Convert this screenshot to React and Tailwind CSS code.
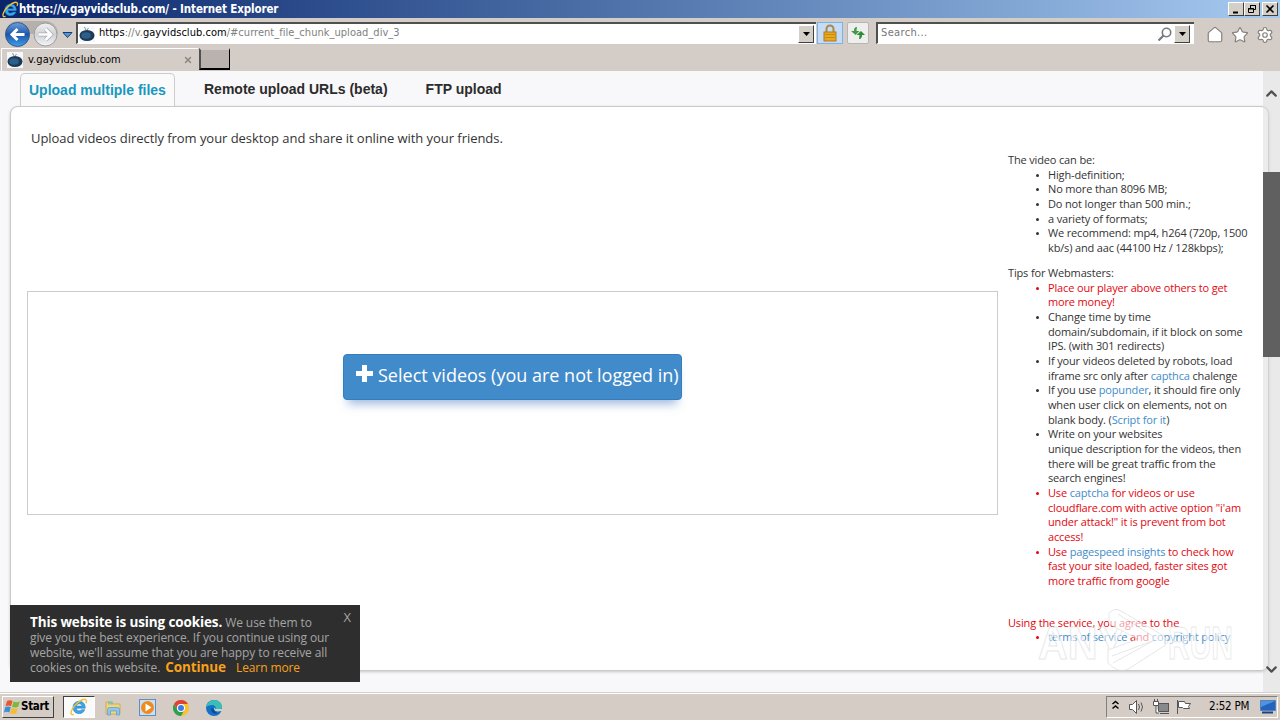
import { ChevronDown, ChevronUp, Home, Settings, Star, X } from 'lucide-react';

const UI = "font-['DejaVu_Sans_Condensed','DejaVu_Sans',sans-serif]";
const SEGOE = "font-['Open_Sans',sans-serif]";

// ── Icons ────────────────────────────────────────────────────────────────────
function IeIcon({ className }) {
  return (
    <svg viewBox="0 0 18 18" className={className}>
      <path d="M15.2 10.2H6.3c.2 1.6 1.3 2.6 2.9 2.6 1 0 1.9-.4 2.4-1.1h3.2c-.8 2.4-3 3.9-5.7 3.9-3.6 0-6.1-2.6-6.1-6.2 0-3.5 2.6-6.1 6.2-6.1 3.8 0 6.2 2.7 6 6.9ZM6.3 8.1h5.8c-.2-1.4-1.3-2.3-2.8-2.3S6.600 6.700 6.300 8.100Z" fill="#3aa5e8" stroke="#1a72bd" strokeWidth=".5" />
      <path d="M3.800 16.300C1.300 17.300.200 15.800 1.600 12.400 3.800 7 10.500 1.600 14.300 1.300c2.300-.2 2.500 1.800 1.700 3.900" fill="none" stroke="#f2c230" strokeWidth="1.400" />
    </svg>
  );
}

function SiteIcon({ className }) {
  return (
    <svg viewBox="0 0 16 16" className={className}>
      <rect width="16" height="16" fill="#f5f7f9" />
      <path d="M7 4 5.500 1M8 4l1.500-2" stroke="#8a9199" />
      <ellipse cx="8" cy="9.500" rx="7.500" ry="5.500" fill="#1d3a55" />
      <ellipse cx="7" cy="9.500" rx="4.800" ry="3.200" fill="#2b5e8a" />
    </svg>
  );
}

function NavArrows() {
  return (
    <svg viewBox="0 0 72 30" className="h-[30px] w-[72px]">
      <defs>
        <linearGradient id="back" x1="0" y1="0" x2="0" y2="1">
          <stop offset="0" stopColor="#6fa0dc" />
          <stop offset=".5" stopColor="#1d55aa" />
          <stop offset="1" stopColor="#3fa0ea" />
        </linearGradient>
        <linearGradient id="fwd" x1="0" y1="0" x2="0" y2="1">
          <stop offset="0" stopColor="#f2f2f2" />
          <stop offset=".5" stopColor="#ced1d6" />
          <stop offset="1" stopColor="#f4f6f8" />
        </linearGradient>
      </defs>
      <path d="M15 2h28a13 13 0 0 1 13 13H3A13 13 0 0 1 15 2Z" fill="#b5b0ab" />
      <circle cx="15.500" cy="15.500" r="12" fill="url(#back)" stroke="#34598c" />
      <circle cx="43.500" cy="15.500" r="11.500" fill="url(#fwd)" stroke="#9a9b9e" />
      <path d="M22.500 15.500h-12M15.500 10l-5.500 5.500 5.500 5.500" fill="none" stroke="#fff" strokeWidth="3" />
      <path d="M36.500 15.500h12M43.500 10l5.500 5.500-5.500 5.500" fill="none" stroke="#a8abb0" strokeWidth="4" />
      <path d="M36.500 15.500h12M43.500 10l5.500 5.500-5.500 5.500" fill="none" stroke="#fff" strokeWidth="2.600" />
      <path d="M61 13.500h9l-4.500 5z" fill="#4a9be8" stroke="#1b3b6b" />
    </svg>
  );
}

function DropButton({ className }) {
  return (
    <span className={`flex items-center justify-center border border-t-white border-l-white border-r-[#404040] border-b-[#404040] bg-[#d4d0c8] ${className}`}>
      <svg viewBox="0 0 7 4" className="h-1 w-[7px]"><path d="M0 0h7L3.500 4z" /></svg>
    </span>
  );
}

function LockIcon() {
  return (
    <svg viewBox="0 0 16 18" className="h-[18px] w-4">
      <path d="M4.500 9V5a3.500 3.500 0 0 1 7 0v4" fill="none" stroke="#a98a45" strokeWidth="2" />
      <rect x="2" y="8" width="12" height="9" fill="#e9a820" stroke="#b27a12" />
      <path d="M3 10.500h10M3 13.500h10" stroke="#c98a14" />
    </svg>
  );
}

function RefreshIcon() {
  return (
    <svg viewBox="0 0 16 14" className="h-3.5 w-4">
      <path d="M7 1C4.500 1 4 3 4 5H1l4.500 4L9.500 5H6.500C6.500 3 7 2 7 1Z" fill="#3e9c45" />
      <path d="M9 13c2.500 0 3-2 3-4h3l-4-4-4.500 4h3C9.500 11 9 12 9 13Z" fill="#2e8b36" />
    </svg>
  );
}

function WindowsFlag() {
  return (
    <svg viewBox="0 0 17 16" className="h-4 w-[17px]">
      <path d="M3 2c2-1.300 4-1 5.500 0L7 7.300C5.500 6.300 3.500 6.200 1.500 7.300Z" fill="#e8562a" />
      <path d="M9.500 2.500c2 1 4 1 6.300-.2l-1.600 5.500c-2 1-4 1.100-6.200 0Z" fill="#7cb83a" />
      <path d="M1.200 8.300c2-1.200 4-1 5.600 0L5.300 13.500c-1.600-1-3.500-1-5.300 0Z" fill="#3b8ede" />
      <path d="M7.700 9c2 1 4 1 6.200-.1l-1.600 5.400c-2 1.100-4 1-6.100 0Z" fill="#f5bd2c" />
    </svg>
  );
}

function FolderIcon() {
  return (
    <svg viewBox="0 0 17 16" className="h-4 w-[17px]">
      <path d="M1 2h6l1 2h7v10H1z" fill="#f0d77d" stroke="#cfae4f" />
      <path d="M3 1.500h5v3H3z" fill="#8bc4a0" />
      <path d="M2.500 15V9.500q0-2 2-2h8q2 0 2 2V15h-3v-4h-6v4z" fill="#8ec5ec" stroke="#5e9bcb" strokeWidth=".7" />
    </svg>
  );
}

function PlayerIcon() {
  return (
    <svg viewBox="0 0 17 17" className="h-[17px] w-[17px]">
      <rect x=".5" y=".5" width="16" height="16" fill="#cbdff3" stroke="#5c8fc2" />
      <circle cx="8.500" cy="8.500" r="6.500" fill="#f08a1d" />
      <path d="M6.500 4.500v8l6-4z" fill="#fff" />
    </svg>
  );
}

function ChromeIcon() {
  return (
    <svg viewBox="0 0 16 16" className="h-4 w-4">
      <circle cx="8" cy="8" r="8" fill="#f7c22d" />
      <path d="M1.070 4A8 8 0 0 1 14.930 4H8a4 4 0 0 0-3.460 6Z" fill="#dc4437" />
      <path d="M1.070 4A8 8 0 0 0 8 16l3.460-6a4 4 0 0 1-6.920 0Z" fill="#2f9e55" />
      <circle cx="8" cy="8" r="4" fill="#fff" />
      <circle cx="8" cy="8" r="3" fill="#3b7de8" />
    </svg>
  );
}

function EdgeIcon() {
  return (
    <svg viewBox="0 0 16 16" className="h-4 w-4">
      <circle cx="8" cy="8" r="8" fill="#1571c8" />
      <path d="M.2 7.500C.8 3.200 4 0 8.200 0 12.800 0 16 3.200 16 6.800c0 2.500-2 4-4.500 4-1.800 0-2.600-.8-2-1.600 1-1.500-.4-4.200-3.500-4.200C3.200 5 1 6 .2 7.500Z" fill="#39bfb5" />
      <path d="M5.500 8C4 13 9 15 14.500 12.500 12 14 7.500 12 7.500 8.500Z" fill="#0c4c94" />
      <path d="M8 7.500c-.5 3 2.500 4.800 7 3.500l1.500 1.500V9H9.500Z" fill="#d4d0c8" />
    </svg>
  );
}

function TrayIcons() {
  return (
    <svg viewBox="0 0 84 18" className="h-[18px] w-[84px]" fill="#fff" stroke="#55565a">
      <path d="M2.500 7 5.500 4.500 8.500 7M2.500 11.500l3-2.500 3 2.500" fill="none" stroke="#000" strokeWidth="1.500" transform="translate(0 -1)" />
      <path d="M19.500 6.500h3l4-4v13l-4-4h-3z" />
      <path d="M28.500 6q2 3 0 6M31 4.500q3 4.500 0 9" fill="none" />
      <rect x="48.500" y="5.500" width="10" height="8" fill="#88898c" />
      <path d="M50 15.500h9M43.500 3.500h5v4h-5zM46 8v7h3M44.500 1v2M47.500 1v2" />
      <path d="M67.500 2v14M68.500 3.500h6l1 2h5l-2 3 1 2h-6l-1-1h-4z" />
    </svg>
  );
}

// ── Browser chrome ───────────────────────────────────────────────────────────
function TitleBar() {
  return (
    <div className="flex h-[18px] items-center bg-linear-to-r from-[#0a246a] to-[#a6caf0] pr-0.5 pl-0.5">
      <IeIcon className="h-[17px] w-[17px]" />
      <span className={`${UI} text-[11.5px] leading-[18px] font-bold tracking-[-0.12px] whitespace-nowrap text-white`}>
        https://v.gayvidsclub.com/ - Internet Explorer
      </span>
      <div className="ml-auto flex h-3.5">
        {['min', 'restore', 'close'].map((kind) => (
          <span
            key={kind}
            className="flex w-4 items-center justify-center border border-t-white border-r-[#404040] border-b-[#404040] border-l-white bg-[#d4d0c8] last:ml-0.5"
          >
            <svg viewBox="0 0 10 10" className="h-2.5 w-2.5" fill="none" stroke="#000">
              {kind === 'min' && <path d="M2 8.500h5" strokeWidth="2" />}
              {kind === 'restore' && <path d="M3.500 4V1.500h5v4H7M3 1.500h6M1.500 4.500h5v4h-5zM1 5h6" />}
              {kind === 'close' && <path d="m1.500 1.500 7 7m0-7-7 7" strokeWidth="1.600" />}
            </svg>
          </span>
        ))}
      </div>
    </div>
  );
}

function AddressRow() {
  return (
    <div className="flex h-[30px] items-start pt-px pl-0.5">
      <NavArrows />
      <div className="mt-[3px] ml-0.5 flex h-[22px] w-[740px] items-center border-t-2 border-l-2 border-t-[#505050] border-l-[#505050] border-b border-b-white bg-white pl-px">
        <SiteIcon className="h-4 w-4" />
        <span className={`${UI} ml-[4px] text-[11px] tracking-[0.03px] whitespace-nowrap text-[#808080]`}>
          <span className="text-black">https</span>://v.<span className="text-black">gayvidsclub.com</span>/#current_file_chunk_upload_div_3
        </span>
        <DropButton className="mr-0.5 ml-auto h-[18px] w-4" />
      </div>
      <div className="mt-[3px] ml-px flex h-[22px] w-[26px] items-center justify-center border border-[#7eb1e8] bg-[#c5dcf7]"><LockIcon /></div>
      <div className="mt-[3px] ml-1 flex h-[22px] w-[22px] items-center justify-center rounded-xs border border-[#b9b5b0] bg-[#eeeeee]"><RefreshIcon /></div>
      <div className="mt-[3px] ml-[7px] flex h-[22px] w-[318px] items-center border-t-2 border-l-2 border-t-[#505050] border-l-[#505050] border-b border-b-white bg-white pr-1 pl-[3px]">
        <span className={`${UI} text-[11px] tracking-[0.35px] text-[#767676]`}>Search...</span>
        <svg viewBox="0 0 14 14" className="mr-0.5 ml-auto h-3.5 w-3.5" fill="none" stroke="#77797c">
          <circle cx="8.500" cy="5.500" r="4.200" strokeWidth="1.600" />
          <path d="m5.500 8.500-5 5" strokeWidth="2.200" />
        </svg>
        <DropButton className="h-[18px] w-4" />
      </div>
      <div className="mt-[7px] ml-3 flex gap-[7px]">
        <Home size={18} fill="#fff" stroke="#85817c" strokeWidth={1.6} />
        <Star size={18} fill="#fff" stroke="#85817c" strokeWidth={1.6} />
        <Settings size={18} fill="#fff" stroke="#85817c" strokeWidth={1.6} />
      </div>
    </div>
  );
}

function TabRow() {
  return (
    <div className="flex h-[23px] items-start">
      <div className="ml-px flex h-[23px] w-[197px] items-center border-t border-l border-white pl-[5px]">
        <SiteIcon className="h-4 w-4" />
        <span className={`${UI} ml-[5px] text-[11px] tracking-[0.08px]`}>v.gayvidsclub.com</span>
        <X size={10} strokeWidth={3.5} className="mr-[5px] ml-auto text-[#8b8680]" />
      </div>
      <div className="ml-px h-[22px] w-[31px] border-t-2 border-r border-b-2 border-l-2 border-t-[#d4ccc7] border-r-black border-b-black border-l-[#505050] bg-[#bab2ae]" />
    </div>
  );
}

// ── Page ─────────────────────────────────────────────────────────────────────
function A({ children }) {
  return <a className="text-[#428bca]">{children}</a>;
}

const RULES = [
  'High-definition;',
  'No more than 8096 MB;',
  'Do not longer than 500 min.;',
  'a variety of formats;',
  <>We recommend: mp4, h264 (720p, 1500<br />kb/s) and aac (44100 Hz / 128kbps);</>,
];

const TIPS = [
  { red: true, body: <>Place our player above others to get<br />more money!</> },
  { body: <>Change time by time<br />domain/subdomain, if it block on some<br />IPS. (with 301 redirects)</> },
  { body: <>If your videos deleted by robots, load<br />iframe src only after <A>capthca</A> chalenge</> },
  { body: <>If you use <A>popunder</A>, it should fire only<br />when user click on elements, not on<br />blank body. (<A>Script for it</A>)</> },
  { body: <>Write on your websites<br />unique description for the videos, then<br />there will be great traffic from the<br />search engines!</> },
  { red: true, body: <>Use <A>captcha</A> for videos or use<br />cloudflare.com with active option "i'am<br />under attack!" it is prevent from bot<br />access!</> },
  { red: true, body: <>Use <A>pagespeed insights</A> to check how<br />fast your site loaded, faster sites got<br />more traffic from google</> },
];

function Item({ red, children }) {
  return (
    <li className={red ? 'flex text-[#e2060f]' : 'flex'}>
      <span className="mt-[6px] mr-[9px] ml-[28px] h-[3px] w-[3px] shrink-0 rounded-full bg-current" />
      <span>{children}</span>
    </li>
  );
}

function Sidebar() {
  return (
    <aside className={`${SEGOE} mt-[46px] ml-[10px] w-[250px] text-[11px] leading-[14.65px] tracking-[-0.15px] whitespace-nowrap text-[#333]`}>
      <p>The video can be:</p>
      <ul>{RULES.map((rule, i) => <Item key={i}>{rule}</Item>)}</ul>
      <p className="mt-[10.5px]">Tips for Webmasters:</p>
      <ul>{TIPS.map((tip, i) => <Item key={i} red={tip.red}>{tip.body}</Item>)}</ul>
      <p className="mt-[27px] text-[#e2060f]">Using the service, you agree to the</p>
      <ul><Item red><A>terms of service</A> and <A>copyright policy</A></Item></ul>
    </aside>
  );
}

function CookieNotice() {
  return (
    <div className={`${SEGOE} absolute top-[534px] left-[10px] h-[77px] w-[350px] bg-[#2e2e2e] pt-[10px] pl-5 text-[12px] leading-[15px] whitespace-nowrap text-[#a5a5a5]`}>
      <p><b className="text-[13.5px] tracking-[-0.13px] text-white">This website is using cookies.</b> <span className="tracking-[-0.1px]">We use them to</span></p>
      <p className="tracking-[-0.1px]">give you the best experience. If you continue using our</p>
      <p className="tracking-[-0.1px]">website, we'll assume that you are happy to receive all</p>
      <p className="tracking-[-0.1px]">
        cookies on this website. <b className="ml-0.5 text-[13.5px] text-[#f9a11b]">Continue</b>
        <span className="ml-[10px] text-[#f9a11b]">Learn more</span>
      </p>
      <span className="absolute top-[5px] right-[9px] text-[13px]">X</span>
    </div>
  );
}

function Watermark() {
  return (
    <svg viewBox="0 0 200 64" className="absolute top-[537px] left-[1036px] h-16 w-[200px] opacity-60" fill="#fff" stroke="#d9d9d9">
      <text x="2" y="51" fontSize="46" fontWeight="700" textLength="87" lengthAdjust="spacingAndGlyphs" fontFamily="Liberation Sans">ANY</text>
      <text x="132" y="51" fontSize="46" fontWeight="700" textLength="65" lengthAdjust="spacingAndGlyphs" fontFamily="Liberation Sans">RUN</text>
      <path d="M73 5q6-6 12-2l43 25q8 5 0 10L94 60q-8 5-16 0l-6-5V42l30-11-29-15Z" />
      <path d="M76 48 119 32M77 55l40-22M82 6l36 23" fill="none" />
    </svg>
  );
}

function Scrollbar() {
  return (
    <div className="absolute top-0 right-0 flex h-[621px] w-[17px] flex-col items-center justify-between bg-[#d9d9d9]/50 pt-[14px] pb-[14px]">
      <ChevronUp size={17} strokeWidth={3} className="text-[#505050]" />
      <ChevronDown size={17} strokeWidth={3} className="text-[#505050]" />
      <div className="absolute top-[101px] left-0 h-[185px] w-[17px] bg-[#606060]" />
    </div>
  );
}

function Page() {
  return (
    <main className="relative h-[621px] overflow-hidden bg-[#f8f8fa] pt-0.5 pl-[10px]">
      <nav className="flex h-[33px] pl-[10px] font-['Liberation_Sans',Arial,sans-serif] text-[14px] leading-[33px] font-bold whitespace-nowrap text-[#2b2b2b]">
        <span className="w-[155px] rounded-t-[5px] border border-b-0 border-[#ccc] bg-[#fafafb] pl-2 text-[#1897be]">Upload multiple files</span>
        <span className="ml-[29px]">Remote upload URLs (beta)</span>
        <span className="ml-[38px]">FTP upload</span>
      </nav>
      <section className="flex h-[565px] w-[1259px] rounded-lg border border-[#c9c9cc] bg-white shadow-[0_1px_3px_rgba(0,0,0,0.2)]">
        <div className="w-[987px] pl-4">
          <p className={`${SEGOE} mt-[21px] ml-1 text-[13px] leading-5 tracking-[-0.05px] whitespace-nowrap text-[#333]`}>
            Upload videos directly from your desktop and share it online with your friends.
          </p>
          <div className="mt-[143px] flex h-[224px] w-[971px] items-start justify-center border border-[#ccc] pt-[62px]">
            <button className={`${SEGOE} flex h-[46px] w-[339px] rounded-[4px] border border-[#357ebd] bg-[#428bca] pt-[7px] pl-3 text-[18px] leading-[26px] whitespace-nowrap text-white shadow-[0_9px_9px_-5px_rgba(66,120,190,0.5)]`}>
              <svg viewBox="0 0 17 17" className="mt-[3px] mr-[5px] h-[17px] w-[17px]" fill="#fff">
                <path d="M6 0h5v6h6v5h-6v6H6v-6H0V6h6z" />
              </svg>
              <span>Select videos (you are not logged in)</span>
            </button>
          </div>
        </div>
        <Sidebar />
      </section>
      <CookieNotice />
      <Watermark />
      <Scrollbar />
    </main>
  );
}

// ── Taskbar ──────────────────────────────────────────────────────────────────
function Taskbar() {
  return (
    <footer className={`${UI} flex h-7 items-start border-t border-[#d4d0c8] bg-[#d4ccc5] shadow-[inset_0_1px_0_#fff] pt-[3px] pl-0.5`}>
      <div className="flex h-[22px] w-[52px] items-center border border-t-white border-r-[#404040] border-b-[#404040] border-l-white pl-px">
        <WindowsFlag />
        <span className="text-[11.5px] font-bold tracking-[-0.3px]">Start</span>
      </div>
      <div className="ml-[9px] flex h-[22px] w-8 items-center justify-center border border-t-[#404040] border-r-white border-b-white border-l-[#404040] bg-[#fafafa]">
        <IeIcon className="h-[18px] w-[18px]" />
      </div>
      <div className="mt-[3px] ml-[10px] flex items-center gap-[17px]">
        <FolderIcon />
        <PlayerIcon />
        <ChromeIcon />
        <EdgeIcon />
      </div>
      <div className="mr-0.5 ml-auto flex h-[22px] w-[172px] items-center border border-t-[#808080] border-r-white border-b-white border-l-[#808080] pl-[3px]">
        <TrayIcons />
        <span className="ml-[15px] text-[11.5px] tracking-[-0.2px] whitespace-nowrap">2:52 PM</span>
        <svg viewBox="0 0 16 14" className="mr-px ml-auto h-3.5 w-4">
          <path d="M.5.500h15v10H.5z" fill="#2364bd" stroke="#5882b5" />
          <path d="M1 1h14L1 7z" fill="#4f94e0" />
          <path d="M2 12.500h11" stroke="#1c4380" strokeWidth="2" />
        </svg>
      </div>
    </footer>
  );
}

export default function App() {
  return (
    <div className="h-[720px] w-[1280px] overflow-hidden bg-[#d4ccc7] text-black">
      <TitleBar />
      <AddressRow />
      <TabRow />
      <Page />
      <Taskbar />
    </div>
  );
}
